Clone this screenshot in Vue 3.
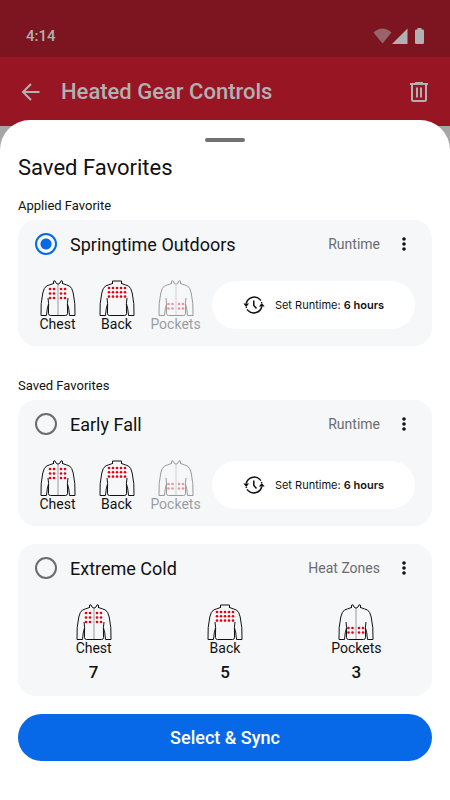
<script setup>
import { ref } from 'vue'

const selected = ref('springtime')

const groups = [
  {
    title: 'Applied Favorite',
    items: [
      { id: 'springtime', name: 'Springtime Outdoors', mode: 'Runtime', runtime: '6 hours' }
    ]
  },
  {
    title: 'Saved Favorites',
    items: [
      { id: 'fall', name: 'Early Fall', mode: 'Runtime', runtime: '6 hours' },
      { id: 'cold', name: 'Extreme Cold', mode: 'Heat Zones', levels: { chest: 7, back: 5, pockets: 3 } }
    ]
  }
]

// dot grids, in jacket viewBox units
const zones = [
  { id: 'chest', label: 'Chest', cols: [10, 14, 21, 25], rows: [9, 13.5, 18] },
  { id: 'back', label: 'Back', cols: [10, 14, 18, 22, 26], rows: [8, 12.3, 16.6] },
  { id: 'pockets', label: 'Pockets', cols: [10.5, 14.5, 21, 25], rows: [24, 28.5] }
]

function isOff(item, zone) {
  return item.mode === 'Runtime' && zone.id === 'pockets'
}
</script>

<template>
  <div class="screen">
    <div class="status-bar">
      <span>4:14</span>
      <svg class="status-icons" viewBox="0 0 52 18" aria-hidden="true">
        <path d="M0.500 5.500Q9.500 -2.500 18.500 5.500L9.500 16.500Z" fill="#99636a" />
        <path d="M34.500 1.500V17H19Z" fill="#b1b1b1" />
        <path d="M44.500 1h4v1.500h1.200q1.300 0 1.300 1.300v11.900q0 1.300-1.300 1.300h-6.400q-1.300 0-1.300-1.300V3.800q0-1.300 1.300-1.300h1.200z" fill="#b1b1b1" />
      </svg>
    </div>

    <header class="app-bar">
      <button class="icon-btn" aria-label="Back">
        <svg class="back-icon" viewBox="0 0 20 20"><path d="M18.500 10H2.500M10 2L2 10l8 8" /></svg>
      </button>
      <h1>Heated Gear Controls</h1>
      <button class="icon-btn" aria-label="Delete">
        <svg class="trash-icon" viewBox="0 0 20 22">
          <path d="M1 3h18M6 2h8M3 3v15.500q0 1.500 1.500 1.500h11q1.500 0 1.500-1.500V3M8 6.500v10M12 6.500v10" />
        </svg>
      </button>
    </header>

    <main class="sheet">
      <div class="handle"></div>
      <h2>Saved Favorites</h2>

      <section v-for="group in groups" :key="group.title">
        <h3>{{ group.title }}</h3>
        <div class="cards">
          <article v-for="item in group.items" :key="item.id" class="card">
            <div class="card-head">
              <input :id="item.id" v-model="selected" type="radio" name="favorite" :value="item.id" />
              <label :for="item.id">{{ item.name }}</label>
              <span class="mode">{{ item.mode }}</span>
              <button class="more-btn" :aria-label="`More options for ${item.name}`">
                <svg viewBox="0 0 4 14">
                  <circle cx="2" cy="2" r="1.8" />
                  <circle cx="2" cy="7" r="1.8" />
                  <circle cx="2" cy="12" r="1.8" />
                </svg>
              </button>
            </div>

            <div class="card-body" :class="{ wide: item.levels }">
              <div class="zones">
                <div v-for="zone in zones" :key="zone.id" class="zone" :class="{ off: isOff(item, zone) }">
                  <svg class="jacket" viewBox="0 0 36 37" aria-hidden="true">
                    <line v-if="zone.id !== 'back'" class="zip" x1="18" y1="4" x2="18" y2="35" />
                    <path v-if="zone.id === 'back'" d="M13.500 4V1h9v3" />
                    <path v-else d="M13.500 4V1.200L15 0.800L16 3L18 4.200L20 3L21 0.800L22.500 1.200V4" />
                    <!-- sleeves -->
                    <path d="M13.500 3.500Q9 5 6.500 6Q4 7.500 2.800 13Q0.500 23 1 35.500H6.500Q7 28 8.500 24M22.500 3.500Q27 5 29.500 6Q32 7.500 33.200 13Q35.500 23 35 35.500H29.500Q29 28 27.500 24" />
                    <path d="M8 18Q9 24 8.500 29V33.500Q8.500 35.500 10.500 35.500H25.500Q27.500 35.500 27.500 33.500V29Q27 24 28 18" />
                    <template v-for="y in zone.rows" :key="y">
                      <circle v-for="x in zone.cols" :key="x" class="dot" :cx="x" :cy="y" r="1.3" />
                    </template>
                  </svg>
                  <span>{{ zone.label }}</span>
                  <strong v-if="item.levels">{{ item.levels[zone.id] }}</strong>
                </div>
              </div>

              <button v-if="item.runtime" class="runtime-btn">
                <svg class="clock-icon" viewBox="0 0 22 20" aria-hidden="true">
                  <path d="M3.200 8.500A8.200 8.200 0 0 1 17 4.500M18.800 11.500A8.200 8.200 0 0 1 5 15.500M10.800 5.500V10.500L13.500 13.500" />
                  <path class="arrow" d="M0.300 8.500H6.100L3.200 12ZM15.900 11.500H21.700L18.800 8Z" />
                  <path d="M17 4.500Q18.300 6 18.800 8M5 15.500Q3.700 14 3.200 12" stroke-dasharray="1.500 1.500" />
                </svg>
                <span>Set Runtime: <b>{{ item.runtime }}</b></span>
              </button>
            </div>
          </article>
        </div>
      </section>

      <button class="sync-btn">Select &amp; Sync</button>
    </main>
  </div>
</template>

<style>
body {
  margin: 0;
  background: #fff;
}
</style>

<style scoped>
.screen {
  background: #a6a6a6;
  color: #111;
  font-family: Roboto, "Noto Sans", sans-serif;
}
button {
  border: 0;
  padding: 0;
  background: none;
  color: inherit;
  font-family: inherit;
  cursor: pointer;
}
h1,
h2,
h3 {
  margin: 0;
}
svg {
  display: block;
}

.status-bar {
  display: flex;
  align-items: center;
  justify-content: space-between;
  height: 57px;
  box-sizing: border-box;
  padding: 14px 25px 0 26px;
  background: #7d1520;
  color: #b1b1b1;
  font-size: 15px;
  font-weight: 500;
}
.status-icons {
  width: 52px;
  height: 18px;
}

.app-bar {
  display: flex;
  align-items: center;
  height: 69px;
  padding: 0 21px;
  background: #981524;
  color: #b1b1b1;
}
.app-bar h1 {
  flex: 1;
  margin-left: 20px;
  font-size: 22px;
  font-weight: 500;
}
.icon-btn svg {
  fill: none;
  stroke: currentColor;
  stroke-width: 2;
}
.back-icon {
  width: 20px;
  height: 20px;
}
.trash-icon {
  width: 20px;
  height: 22px;
}

.sheet {
  display: flex;
  flex-direction: column;
  margin-top: -6px;
  padding: 18px 18px 39px;
  border-radius: 30px 30px 0 0;
  background: #fff;
}
.handle {
  align-self: center;
  width: 40px;
  height: 4px;
  border-radius: 2px;
  background: #717173;
}
h2 {
  margin-top: 12px;
  font-size: 22px;
  font-weight: 400;
  line-height: 28px;
}
h3 {
  margin: 16px 0 6px;
  font-size: 13px;
  font-weight: 400;
  line-height: 16px;
}
section + section h3 {
  margin-top: 32px;
}

.cards {
  display: flex;
  flex-direction: column;
  gap: 18px;
}
.card {
  padding: 12px 10px 14px;
  border-radius: 18px;
  background: #f5f7f9;
}
.card-head {
  display: flex;
  align-items: center;
  height: 24px;
  padding: 0 12px 0 7px;
}
.card-head input {
  appearance: none;
  width: 22px;
  height: 22px;
  box-sizing: border-box;
  margin: 0;
  border: 2px solid #6b6c70;
  border-radius: 50%;
}
.card-head input:checked {
  border-color: #0869e8;
  background: radial-gradient(circle, #0869e8 5px, transparent 6px);
}
.card-head label {
  flex: 1;
  margin-left: 13px;
  font-size: 18px;
}
.mode {
  color: #6b6c70;
  font-size: 14px;
}
.more-btn {
  margin-left: 18px;
  padding: 0 4px;
}
.more-btn svg {
  width: 4px;
  height: 14px;
  fill: #111;
}

.card-body {
  display: flex;
  align-items: center;
  gap: 7px;
  margin-top: 24px;
  padding-right: 7px;
}
.zones {
  display: grid;
  grid-template-columns: repeat(3, 59px);
}
.wide {
  padding-right: 0;
}
.wide .zones {
  flex: 1;
  grid-template-columns: repeat(3, 1fr);
}
.zone {
  display: flex;
  flex-direction: column;
  align-items: center;
  font-size: 14px;
  line-height: 15px;
}
.zone strong {
  margin-top: 6px;
  font-size: 17px;
  font-weight: 500;
  line-height: 20px;
}
.jacket {
  width: 36px;
  height: 37px;
  fill: none;
  stroke: #111;
}
.zip {
  stroke: #999;
}
.dot {
  fill: #e60012;
  stroke: none;
}
.off {
  opacity: 0.4;
}

.runtime-btn {
  display: flex;
  flex: 1;
  align-items: center;
  justify-content: center;
  gap: 10px;
  height: 48px;
  margin-bottom: 2px;
  border-radius: 24px;
  background: #fff;
  font-family: Inter, Roboto, sans-serif;
  font-size: 11px;
  white-space: nowrap;
}
.runtime-btn b {
  font-weight: 600;
}
.clock-icon {
  width: 22px;
  height: 20px;
  fill: none;
  stroke: #111;
  stroke-width: 1.5;
}
.clock-icon .arrow {
  fill: #111;
  stroke: none;
}

.sync-btn {
  height: 47px;
  margin-top: 18px;
  border-radius: 24px;
  background: #0869e8;
  color: #fff;
  font-size: 18px;
  font-weight: 500;
}
</style>
